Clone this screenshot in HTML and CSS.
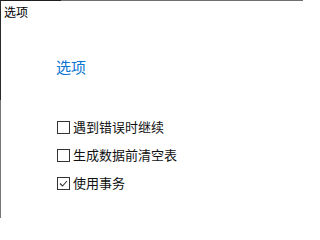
FILE: index.html
```html
<!DOCTYPE html>
<html lang="zh-CN">
<head>
<meta charset="utf-8">
<title>选项</title>
<link rel="stylesheet" href="styles.css">
</head>
<body>
<div class="window">
  <div class="title">选项</div>
  <div class="content">
    <h1 class="heading">选项</h1>
    <ul class="options">
      <li class="option"><span class="box"></span><span class="label">遇到错误时继续</span></li>
      <li class="option"><span class="box"></span><span class="label">生成数据前清空表</span></li>
      <li class="option"><span class="box checked"><svg width="11" height="11" viewBox="0 0 11 11"><polyline points="2,5.5 4.5,8 9,3" fill="none" stroke="#333" stroke-width="1.1"/></svg></span><span class="label">使用事务</span></li>
    </ul>
  </div>
</div>
</body>
</html>
```

FILE: styles.css
```css
html, body {
  margin: 0;
  padding: 0;
}
body {
  width: 303px;
  height: 218px;
  overflow: hidden;
  background: #ffffff;
  font-family: "Noto Sans CJK SC", "Noto Sans", sans-serif;
  color: #000000;
}
.window {
  position: relative;
  box-sizing: border-box;
  height: 218px;
  border-top: 1px solid #6f6f6f;
  border-left: 1px solid #777777;
}
.window::before {
  content: "";
  position: absolute;
  top: -1px;
  left: -1px;
  width: 61px;
  height: 1px;
  background: #1e1e1e;
}
.window::after {
  content: "";
  position: absolute;
  top: -1px;
  left: -1px;
  width: 1px;
  height: 100px;
  background: #2a2a2a;
}
.title {
  font-size: 12px;
  line-height: 16px;
  padding: 3px 0 0 3px;
}
.content {
  padding-left: 55px;
}
.heading {
  margin: 37px 0 0 0;
  font-size: 15px;
  line-height: 20px;
  font-weight: normal;
  color: #0a74d1;
}
.options {
  list-style: none;
  margin: 36px 0 0 0;
  padding: 0;
}
.option {
  display: flex;
  align-items: center;
  height: 28px;
  font-size: 13px;
  color: #111111;
}
.box {
  box-sizing: border-box;
  width: 13px;
  height: 13px;
  margin-left: 1px;
  margin-right: 3px;
  border: 1px solid #333333;
  display: flex;
  align-items: center;
  justify-content: center;
}
.box svg {
  display: block;
}
.label {
  line-height: 16px;
}
```
